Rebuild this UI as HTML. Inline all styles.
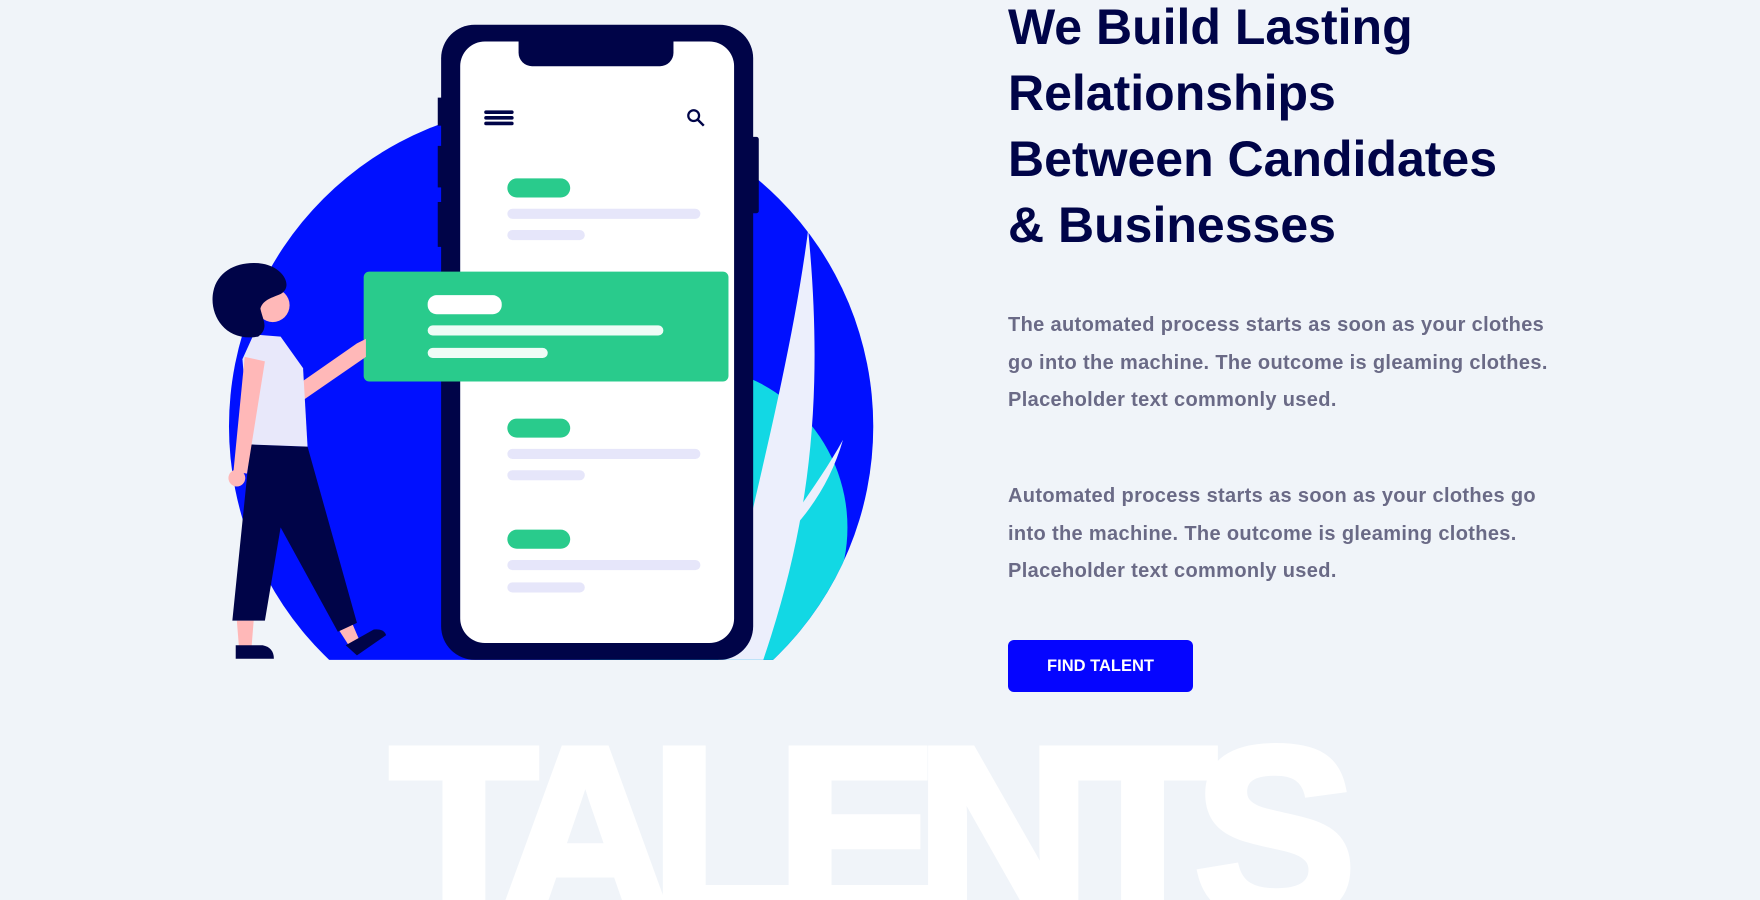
<!DOCTYPE html>
<html><head><meta charset="utf-8"><style>
html,body{margin:0;padding:0;width:1760px;height:900px;overflow:hidden;}
body{background:#f0f4f9;position:relative;font-family:"Liberation Sans",sans-serif;}
.wrap{position:absolute;left:0;top:0;width:1760px;height:900px;overflow:hidden;}
svg.ill{position:absolute;left:0;top:0;width:1760px;height:900px;}
h1{position:absolute;left:1008px;top:-6px;margin:0;font-size:50px;line-height:66px;font-weight:bold;color:#000448;}
p{position:absolute;left:1008px;margin:0;font-size:20px;line-height:37.5px;color:#6a6a86;font-weight:bold;width:555px;letter-spacing:0.35px;}
.btn{position:absolute;left:1008px;top:640px;width:185px;height:52px;background:#0505ff;border-radius:6px;color:#fff;font-weight:bold;font-size:16.5px;text-align:center;line-height:52px;}
.bigbox{position:absolute;left:0;top:712px;width:1760px;height:188px;overflow:hidden;}
.big{position:absolute;left:390px;top:0;font-size:242px;font-weight:900;color:#fff;letter-spacing:-22px;line-height:1;-webkit-text-stroke:8px #fff;white-space:nowrap;}
</style></head><body><div class="wrap">
<div class="bigbox"><div class="big">TALENTS</div></div>
<svg class="ill" viewBox="0 0 1568 802" preserveAspectRatio="none">
<defs>
<clipPath id="cl"><rect x="0" y="0" width="1000" height="588"/></clipPath>
<clipPath id="circ"><circle cx="491" cy="380" r="287"/></clipPath>
</defs>
<g clip-path="url(#cl)">
<circle cx="491" cy="380" r="287" fill="#0010ff"/>
<g clip-path="url(#circ)">
<circle cx="610" cy="470" r="145" fill="#12d8e4"/>
</g>
<path d="M720,205 C705,320 675,430 640,588 L680,588 C720,470 735,360 720,205 Z" fill="#eceffc"/>
<path d="M751,392 C730,430 705,460 688,490 C720,460 740,430 751,392 Z" fill="#eceffc"/>
<rect x="390" y="87" width="6" height="25" fill="#000448"/>
<rect x="390" y="130" width="6" height="37" fill="#000448"/>
<rect x="390" y="180" width="6" height="40" fill="#000448"/>
<rect x="668" y="122" width="8" height="68" rx="2" fill="#000448"/>
<rect x="393" y="22" width="278" height="566" rx="30" fill="#000448"/>
<rect x="410" y="37" width="244" height="536" rx="22" fill="#fff"/>
<path d="M462,37 H600 V47 A12,12 0 0 1 588,59 H474 A12,12 0 0 1 462,47 Z" fill="#000448"/>
<g stroke="#000448" stroke-width="3.2" stroke-linecap="round">
<line x1="433" y1="100" x2="456" y2="100"/><line x1="433" y1="105" x2="456" y2="105"/><line x1="433" y1="110" x2="456" y2="110"/>
</g>
<circle cx="618" cy="103" r="4.8" fill="none" stroke="#000448" stroke-width="2"/>
<line x1="621.5" y1="106.5" x2="627" y2="112" stroke="#000448" stroke-width="2.2"/>
<g fill="#29cb8c"><rect x="452" y="159" width="56" height="17" rx="8.5"/><rect x="452" y="373" width="56" height="17" rx="8.5"/><rect x="452" y="472" width="56" height="17" rx="8.5"/></g>
<g fill="#e6e6fa">
<rect x="452" y="186" width="172" height="9" rx="4.5"/><rect x="452" y="205" width="69" height="9" rx="4.5"/>
<rect x="452" y="400" width="172" height="9" rx="4.5"/><rect x="452" y="419" width="69" height="9" rx="4.5"/>
<rect x="452" y="499" width="172" height="9" rx="4.5"/><rect x="452" y="519" width="69" height="9" rx="4.5"/>
</g>
<rect x="324" y="242" width="325" height="98" rx="5" fill="#29cb8c"/>
<rect x="381" y="263" width="66" height="17" rx="8" fill="#fff"/>
<rect x="381" y="290" width="210" height="9" rx="4.5" fill="#eefcf6"/>
<rect x="381" y="310" width="107" height="9" rx="4.5" fill="#eefcf6"/>
<path d="M262,345 L318,306 L326,302 L326,318 L268,358 Z" fill="#ffb8b8"/>
<path d="M211,553 L226,553 L224,578 L213,578 Z" fill="#ffb8b8"/>
<path d="M301,560 L314,556 L320,570 L310,574 Z" fill="#ffb8b8"/>
<path d="M223,396 L274,398 L318,555 L301,563 L250,470 L236,553 L207,553 Z" fill="#000448"/>
<path d="M210,575 L234,575 Q244,577 244,587 L210,587 Z" fill="#000448"/>
<path d="M308,575 L333,561 Q342,560 344,566 L318,584 Z" fill="#000448"/>
<path d="M226,298 L250,300 L270,328 L274,398 L222,396 L216,320 Z" fill="#e8e8fa"/>
<path d="M218,318 L236,322 L220,422 L208,420 Z" fill="#ffb8b8"/>
<circle cx="211" cy="426" r="7.5" fill="#ffb8b8"/>
<circle cx="243" cy="272" r="15" fill="#ffb8b8"/>
<path d="M230,300 C200,305 186,280 190,260 C194,240 214,232 234,235 C252,238 262,255 250,262 C240,266 234,268 232,275 C234,285 240,292 230,300 Z" fill="#000448"/>
</g>
</svg>
<h1>We Build Lasting<br>Relationships<br>Between Candidates<br>&amp; Businesses</h1>
<p style="top:307px">The automated process starts as soon as your clothes go into the machine. The outcome is gleaming clothes. Placeholder text commonly used.</p>
<p style="top:478px">Automated process starts as soon as your clothes go into the machine. The outcome is gleaming clothes. Placeholder text commonly used.</p>
<div class="btn">FIND TALENT</div>
</div></body></html>
